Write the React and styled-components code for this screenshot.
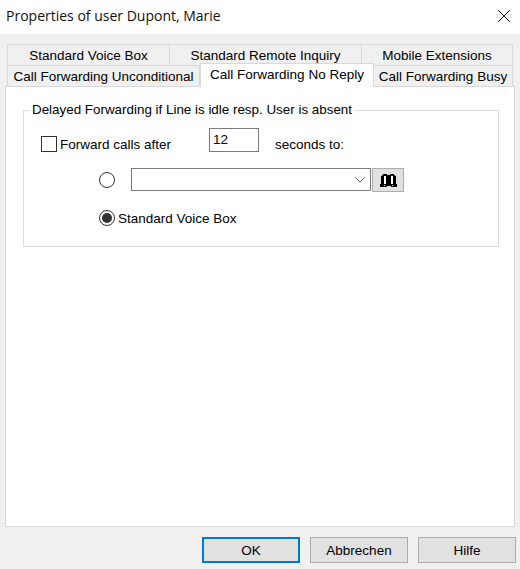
import styled, { createGlobalStyle } from "styled-components";

const GlobalStyle = createGlobalStyle`
  html, body {
    margin: 0;
    padding: 0;
    background: #f0f0f0;
  }
`;

const Dialog = styled.div`
  width: 520px;
  height: 569px;
  display: flex;
  flex-direction: column;
  background: #f0f0f0;
  color: #000;
  font-family: "Liberation Sans", Arial, sans-serif;
  font-size: 13.5px;
  overflow: hidden;
`;
const TitleBar = styled.div`
  height: 34px;
  flex: none;
  background: #fff;
  display: flex;
  align-items: center;
  justify-content: space-between;
  padding: 0 10px 3px 6px;
  box-sizing: border-box;
`;
const Title = styled.div`
  font-family: "Open Sans", "Noto Sans", sans-serif;
  font-size: 14px;
  color: #111;
`;
const CloseIcon = styled.svg`
  width: 12px;
  height: 12px;
  display: block;
`;
const Body = styled.div`
  flex: 1;
  display: flex;
  flex-direction: column;
  padding: 10px 5px 0 5px;
`;
const TabRow = styled.div`
  display: flex;
  height: 21px;
  padding-left: 2px;
`;
const Tab = styled.div`
  width: ${({ $width }) => $width}px;
  box-sizing: border-box;
  border: 1px solid #d9d9d9;
  border-bottom: none;
  border-left-width: ${({ $first }) => ($first ? 1 : 0)}px;
  background: #f0f0f0;
  display: flex;
  align-items: center;
  justify-content: center;
  white-space: nowrap;
`;
const ActiveTab = styled(Tab)`
  height: 24px;
  margin-top: -2px;
  position: relative;
  z-index: 1;
  background: #fff;
  border-left-width: 1px;
  padding-bottom: 2px;
`;
const Page = styled.div`
  flex: 1;
  background: #fff;
  border: 1px solid #d9d9d9;
  padding: 15px 15px 0 17px;
`;
const Group = styled.fieldset`
  margin: 0;
  padding: 0;
  height: 145px;
  box-sizing: border-box;
  border: 1px solid #dcdcdc;
  display: flex;
  flex-direction: column;
`;
const Legend = styled.legend`
  margin-left: 6px;
  padding: 0 2px;
  font-size: 13.4px;
  line-height: 16px;
`;
const ForwardRow = styled.div`
  display: flex;
  align-items: flex-start;
  margin-top: 10px;
  margin-left: 17px;
`;
const CheckBox = styled.div`
  width: 16px;
  height: 16px;
  margin-top: 8px;
  box-sizing: border-box;
  border: 1px solid #333;
  background: #fff;
`;
const CheckLabel = styled.span`
  margin-left: 3px;
  margin-top: 9px;
  width: 149px;
  line-height: 16px;
`;
const SecondsInput = styled.div`
  width: 50px;
  height: 24px;
  box-sizing: border-box;
  border: 1px solid #7a7a7a;
  padding: 3px 0 0 3px;
  line-height: 16px;
`;
const SecondsLabel = styled.span`
  margin-left: 16px;
  margin-top: 9px;
  line-height: 16px;
`;
const TargetRow = styled.div`
  display: flex;
  align-items: center;
  margin-top: 14px;
  margin-left: 75px;
`;
const Radio = styled.div`
  width: 16px;
  height: 16px;
  box-sizing: border-box;
  border: 1px solid #333;
  border-radius: 50%;
  background: #fff;
  flex: none;
  display: flex;
  align-items: center;
  justify-content: center;
`;
const RadioDot = styled.div`
  width: 10px;
  height: 10px;
  border-radius: 50%;
  background: #333;
`;
const Combo = styled.div`
  width: 240px;
  height: 23px;
  margin-left: 16px;
  box-sizing: border-box;
  border: 1px solid #7a7a7a;
  background: #fff;
  display: flex;
  align-items: center;
  justify-content: flex-end;
  padding-right: 5px;
`;
const BookButton = styled.div`
  width: 32px;
  height: 24px;
  margin-left: 1px;
  margin-top: 1px;
  box-sizing: border-box;
  border: 1px solid #adadad;
  background: #e1e1e1;
  display: flex;
  align-items: center;
  justify-content: center;
`;
const VoiceBoxRow = styled.div`
  display: flex;
  align-items: center;
  margin-top: 18px;
  margin-left: 75px;
`;
const VoiceBoxLabel = styled.span`
  margin-left: 3px;
`;
const Footer = styled.div`
  height: 42px;
  flex: none;
  display: flex;
  justify-content: flex-end;
  gap: 10px;
  padding: 10px 4px 0 0;
  box-sizing: border-box;
`;
const Button = styled.div`
  width: 98px;
  height: 26px;
  box-sizing: border-box;
  border: ${({ $primary }) =>
    $primary ? "2px solid #0078d7" : "1px solid #adadad"};
  background: #e1e1e1;
  display: flex;
  align-items: center;
  justify-content: center;
`;

const BookIcon = () => (
  <svg width="17" height="13" viewBox="0 0 17 13" shapeRendering="crispEdges">
    <path
      fill="#000"
      d="M3 0h4v1h3V0h4v1h1v1h1v8h1v3h-6v-1H7v1H0v-3h1V2h1V1h1z"
    />
    <path fill="#fff" d="M4 2h2v8H4zM11 2h2v8h-2z" />
    <path fill="#e1e1e1" d="M4 11h1v1H4zM12 11h1v1h-1z" />
  </svg>
);

const ChevronIcon = () => (
  <svg width="10" height="6" viewBox="0 0 10 6">
    <path d="M.5 .5l4.5 4.5 4.5-4.5" fill="none" stroke="#666" strokeWidth="1" />
  </svg>
);

const App = () => {
  return (
    <Dialog>
      <GlobalStyle />
      <TitleBar>
        <Title>Properties of user Dupont, Marie</Title>
        <CloseIcon viewBox="0 0 12 12">
          <path d="M0 0l12 12M12 0L0 12" stroke="#111" strokeWidth="1" />
        </CloseIcon>
      </TitleBar>
      <Body>
        <TabRow>
          <Tab $first $width={163}>Standard Voice Box</Tab>
          <Tab $width={192}>Standard Remote Inquiry</Tab>
          <Tab $width={151}>Mobile Extensions</Tab>
        </TabRow>
        <TabRow>
          <Tab $first $width={193}>Call Forwarding Unconditional</Tab>
          <ActiveTab $width={174}>Call Forwarding No Reply</ActiveTab>
          <Tab $width={139}>Call Forwarding Busy</Tab>
        </TabRow>
        <Page>
          <Group>
            <Legend>Delayed Forwarding if Line is idle resp. User is absent</Legend>
            <ForwardRow>
              <CheckBox />
              <CheckLabel>Forward calls after</CheckLabel>
              <SecondsInput>12</SecondsInput>
              <SecondsLabel>seconds to:</SecondsLabel>
            </ForwardRow>
            <TargetRow>
              <Radio />
              <Combo>
                <ChevronIcon />
              </Combo>
              <BookButton>
                <BookIcon />
              </BookButton>
            </TargetRow>
            <VoiceBoxRow>
              <Radio>
                <RadioDot />
              </Radio>
              <VoiceBoxLabel>Standard Voice Box</VoiceBoxLabel>
            </VoiceBoxRow>
          </Group>
        </Page>
      </Body>
      <Footer>
        <Button $primary>OK</Button>
        <Button>Abbrechen</Button>
        <Button>Hilfe</Button>
      </Footer>
    </Dialog>
  );
};

export default App;
